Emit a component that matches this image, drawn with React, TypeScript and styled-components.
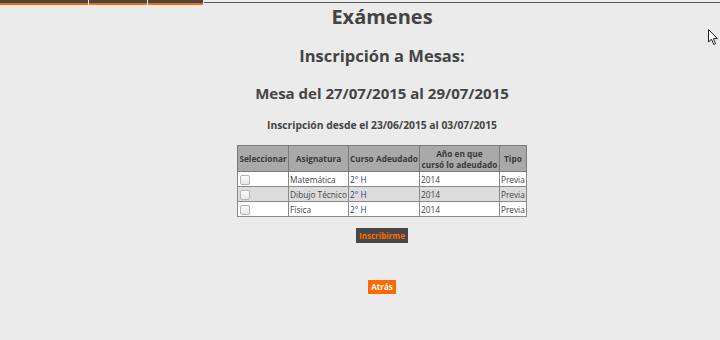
import React from 'react'
import styled, { createGlobalStyle } from 'styled-components'

const GlobalStyle = createGlobalStyle`
  html, body {
    margin: 0;
    padding: 0;
    background: #ebebeb;
    font-family: 'Open Sans', 'Liberation Sans', sans-serif;
    color: #444;
  }
`

const Page = styled.div`
  position: relative;
  width: 720px;
  height: 340px;
  overflow: hidden;
`

const Menu = styled.nav`
  display: flex;
  align-items: flex-start;
  height: 6px;
`

const Tab = styled.div<{ w: number }>`
  width: ${(p) => p.w}px;
  height: 3px;
  background: #454545;
  border-bottom: 2px solid #ff6a00;
  margin-right: 1px;
`

const MenuLine = styled.div`
  flex: 1;
  height: 1px;
  margin-top: 2px;
  background: #5a5a5a;
`

const Content = styled.main`
  display: flex;
  flex-direction: column;
  align-items: center;
  padding-left: 44px;
`

const Title = styled.h1`
  margin: 0;
  font-size: 20px;
  line-height: 22px;
  font-weight: 700;
  color: #444;
`

const SubTitle = styled.h2<{ top: number; size: number }>`
  margin: ${(p) => p.top}px 0 0;
  font-size: ${(p) => p.size}px;
  line-height: 22px;
  font-weight: 700;
  color: #444;
`

const Period = styled.h4`
  margin: 13px 0 0;
  font-size: 10.3px;
  line-height: 16px;
  font-weight: 700;
  color: #444;
`

const Table = styled.table`
  margin-top: 12px;
  border-collapse: collapse;
  border: 1px solid #6a6a6a;
  font-size: 8.3px;
  color: #444;
`

const Th = styled.th<{ w: number }>`
  width: ${(p) => p.w}px;
  padding: 0 1px;
  height: 26px;
  background: #a9a9a9;
  border: 1px solid #7a7a7a;
  font-weight: 700;
  line-height: 11px;
  white-space: nowrap;
  color: #3a3a3a;
  box-sizing: border-box;
`

const Row = styled.tr<{ shade?: boolean }>`
  background: ${(p) => (p.shade ? '#dcdcdc' : '#fff')};
`

const Td = styled.td<{ blue?: boolean }>`
  height: 14px;
  padding: 0 1px;
  border: 1px solid #8a8a8a;
  line-height: 13px;
  white-space: nowrap;
  color: ${(p) => (p.blue ? '#2a3f8a' : '#444')};
`

const Check = styled.span`
  display: inline-block;
  width: 8px;
  height: 8px;
  margin-left: 1px;
  border: 1px solid #b5b5b5;
  border-radius: 2px;
  background: linear-gradient(#fdfdfd, #e6e6e6);
  vertical-align: middle;
`

const DarkButton = styled.button`
  margin-top: 11px;
  padding: 0 3px;
  height: 15px;
  border: none;
  background: #474747;
  color: #ff6a00;
  font-family: 'Open Sans', 'Liberation Sans', sans-serif;
  font-size: 8px;
  font-weight: 700;
  line-height: 15px;
`

const OrangeButton = styled.button`
  margin-top: 37px;
  padding: 0 3px;
  height: 14px;
  border: none;
  background: #ff6a00;
  color: #fff;
  font-family: 'Open Sans', 'Liberation Sans', sans-serif;
  font-size: 8px;
  font-weight: 700;
  line-height: 14px;
`

const Cursor = styled.svg`
  position: absolute;
  left: 708px;
  top: 29px;
`

const rows = [
  { name: 'Matemática', shade: false },
  { name: 'Dibujo Técnico', shade: true },
  { name: 'Física', shade: false },
]

export default function App() {
  return (
    <Page>
      <GlobalStyle />
      <Menu>
        <Tab w={88} />
        <Tab w={58} />
        <Tab w={55} />
        <MenuLine />
      </Menu>
      <Content>
        <Title>Exámenes</Title>
        <SubTitle top={17} size={16.5}>Inscripción a Mesas:</SubTitle>
        <SubTitle top={15} size={15}>Mesa del 27/07/2015 al 29/07/2015</SubTitle>
        <Period>Inscripción desde el 23/06/2015 al 03/07/2015</Period>
        <Table>
          <thead>
            <tr>
              <Th w={51}>Seleccionar</Th>
              <Th w={59}>Asignatura</Th>
              <Th w={71}>Curso Adeudado</Th>
              <Th w={80}>
                Año en que
                <br />
                cursó lo adeudado
              </Th>
              <Th w={27}>Tipo</Th>
            </tr>
          </thead>
          <tbody>
            {rows.map((r) => (
              <Row key={r.name} shade={r.shade}>
                <Td>
                  <Check />
                </Td>
                <Td>{r.name}</Td>
                <Td blue>2° H</Td>
                <Td>2014</Td>
                <Td>Previa</Td>
              </Row>
            ))}
          </tbody>
        </Table>
        <DarkButton>Inscribirme</DarkButton>
        <OrangeButton>Atrás</OrangeButton>
      </Content>
      <Cursor width="11" height="17" viewBox="0 0 11 17">
        <path d="M0.5 0.5 L0.5 13 L3.5 10.2 L5.8 15.5 L7.6 14.7 L5.4 9.6 L9.5 9.6 Z" fill="#fff" stroke="#222" strokeWidth="1" strokeLinejoin="round" />
      </Cursor>
    </Page>
  )
}
